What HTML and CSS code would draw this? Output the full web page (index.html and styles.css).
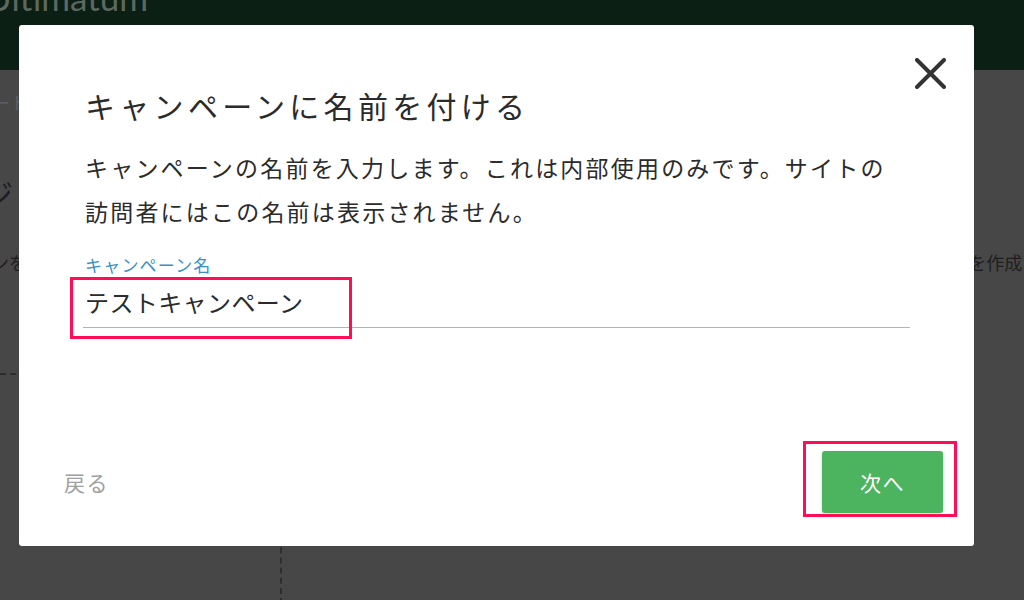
FILE: index.html
```html
<!DOCTYPE html>
<html lang="ja">
<head>
    <meta charset="UTF-8">
    <meta name="viewport" content="width=device-width, initial-scale=1.0">
    <title>Ultimatum</title>
    <link rel="stylesheet" href="styles.css">
</head>
<body>
    <div class="topbar">
        <div class="brand">Ultimatum</div>
    </div>
    <div class="page">
        <div class="crumb">スタート</div>
        <div class="page-title">キャンペーンページ</div>
        <div class="intro">
            <span>新しいキャンペーンを</span>
            <span class="intro-right">キャンペーンを作成</span>
        </div>
        <div class="drop">
            <div class="drop-col"></div>
        </div>
    </div>

    <div class="modal">
        <button class="close" aria-label="閉じる">
            <svg width="31" height="31" viewBox="0 0 31 31">
                <path d="M2 2 L29 29 M29 2 L2 29" stroke="#333" stroke-width="4" stroke-linecap="round"/>
            </svg>
        </button>
        <h2 class="modal-title">キャンペーンに名前を付ける</h2>
        <p class="modal-text">キャンペーンの名前を入力します。これは内部使用のみです。サイトの訪問者にはこの名前は表示されません。</p>
        <div class="field">
            <label class="field-label" for="name">キャンペーン名</label>
            <input class="field-input" id="name" type="text" value="テストキャンペーン">
        </div>
        <div class="footer">
            <a class="back" href="#">戻る</a>
            <button class="next">次へ</button>
        </div>
        <div class="mark mark-input"></div>
        <div class="mark mark-button"></div>
    </div>
</body>
</html>
```

FILE: styles.css
```css
body{
    margin: 0;
    width: 1024px;
    height: 600px;
    overflow: hidden;
    position: relative;
    font-family: "Noto Sans CJK JP", "Noto Sans", sans-serif;
    background-color: #474747;
}
.topbar{
    height: 70px;
    background-color: #0b1f14;
    overflow: hidden;
}
.brand{
    font-family: Lato, sans-serif;
    font-size: 35px;
    line-height: 1;
    color: #5d685f;
    margin-top: -20px;
    margin-left: -14px;
    white-space: nowrap;
}
.page{
    height: 530px;
    background-color: #474747;
    overflow: hidden;
}
.crumb{
    font-size: 18px;
    line-height: 24px;
    color: #5b6067;
    margin-top: 20px;
    margin-left: -44px;
    white-space: nowrap;
}
.page-title{
    font-size: 30px;
    line-height: 40px;
    color: #1e1e1e;
    margin-top: 58px;
    margin-left: -255px;
    white-space: nowrap;
}
.intro{
    display: flex;
    font-size: 18px;
    line-height: 24px;
    color: #1e1e1e;
    margin-top: 38px;
    margin-left: -152px;
    white-space: nowrap;
}
.intro-right{
    margin-left: 834px;
}
.drop{
    margin-top: 99px;
    margin-left: -20px;
    width: 700px;
    height: 300px;
    border-top: 2px dashed #2e2e2e;
}
.drop-col{
    margin-left: 300px;
    height: 300px;
    border-left: 2px dashed #2e2e2e;
}

.modal{
    position: absolute;
    left: 19px;
    top: 25px;
    width: 955px;
    height: 521px;
    background-color: white;
    border-radius: 3px;
    display: flex;
    flex-direction: column;
    box-sizing: border-box;
    padding: 60px 0 33px 0;
    color: #2b2b2b;
}
.close{
    position: absolute;
    top: 33px;
    right: 28px;
    width: 31px;
    height: 31px;
    padding: 0;
    border: none;
    background: none;
}
.close svg{
    display: block;
}
.modal-title{
    margin: 0 0 0 66px;
    font-size: 30px;
    line-height: 40px;
    font-weight: normal;
    letter-spacing: 4.3px;
}
.modal-text{
    margin: 20px 0 0 66px;
    width: 808px;
    font-size: 23px;
    line-height: 44px;
    letter-spacing: 2.2px;
}
.field{
    margin: 22px 0 0 64px;
    width: 827px;
}
.field-label{
    display: block;
    margin-left: 2px;
    font-size: 17px;
    line-height: 20px;
    letter-spacing: 1.2px;
    color: #3a8fc4;
}
.field-input{
    display: block;
    width: 100%;
    box-sizing: border-box;
    margin-top: 11px;
    padding: 0 0 9px 2px;
    border: none;
    border-bottom: 1px solid #b3b3b3;
    font-family: inherit;
    font-size: 24px;
    line-height: 32px;
    letter-spacing: 0.4px;
    color: #2b2b2b;
    outline: none;
}
.footer{
    margin-top: auto;
    display: flex;
    justify-content: space-between;
    align-items: center;
    padding: 0 31px 0 45px;
}
.back{
    font-size: 21px;
    letter-spacing: 1.5px;
    color: #a0a0a0;
    text-decoration: none;
}
.next{
    width: 121px;
    height: 62px;
    border: none;
    border-radius: 3px;
    background-color: #4cb35f;
    box-shadow: 0 1px 3px rgba(0, 0, 0, 0.2);
    font-family: inherit;
    font-size: 21px;
    letter-spacing: 1.5px;
    color: white;
}
.mark{
    position: absolute;
    border: 3px solid #ff0d57;
    box-sizing: border-box;
}
.mark-input{
    left: 51px;
    top: 252px;
    width: 282px;
    height: 62px;
}
.mark-button{
    left: 784px;
    top: 416px;
    width: 154px;
    height: 76px;
}
```
